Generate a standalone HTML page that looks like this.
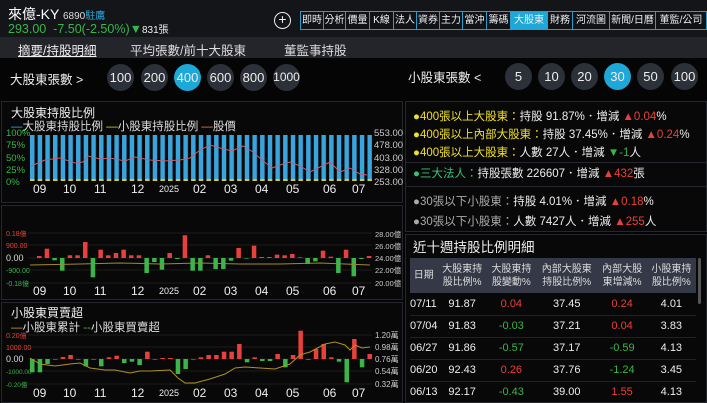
<!DOCTYPE html><html><head><meta charset="utf-8"><style>
*{margin:0;padding:0;box-sizing:border-box}
body{width:707px;height:403px;overflow:hidden;background:#050505;font-family:"Liberation Sans","Noto Sans CJK TC",sans-serif;color:#eee;position:relative}
.a{position:absolute;white-space:nowrap}
.nav{position:absolute;left:300px;top:11px;height:19px;display:flex;border:1px solid #2a9ec8}
.nav div{border-right:1px solid #2a9ec8;font-size:10px;line-height:17px;text-align:center;color:#eee;background:#101216}
.c{position:absolute;width:27px;height:27px;border-radius:50%;background:#2c3038;font-size:13px;line-height:27px;text-align:center;color:#eee}
.c.on{background:#1ea8d8}
.panel{position:absolute;background:#080808;border:1px solid #26272e}
.g{color:#3ab54a}.r{color:#e8413c}.y{color:#f0e020}
.info div{position:absolute;left:7px;font-size:11.5px;white-space:nowrap}
table{border-collapse:collapse;font-size:11px}
</style></head><body>
<div class="a" style="left:0;top:0;width:707px;height:37px;background:#141519"></div>
<div class="a" style="left:8px;top:4px;font-size:14px;color:#fff">來億-KY <span style="font-size:10px;color:#ddd">6890</span><span style="font-size:10px;color:#2aa8d8">駐鷹</span></div>
<div class="a g" style="left:8px;top:21px;font-size:12.5px">293.00 &nbsp;-7.50(-2.50%)▼<span style="font-size:10px;color:#eee">831張</span></div>
<div class="a" style="left:274px;top:12px;width:17px;height:17px;border:1.5px solid #eee;border-radius:50%;text-align:center;font-size:14px;line-height:13px">+</div>
<div class="nav">
<div style="width:23px">即時</div><div style="width:22px">分析</div><div style="width:24px">價量</div><div style="width:24px">K線</div><div style="width:23px">法人</div><div style="width:23px">資券</div><div style="width:23px">主力</div><div style="width:24px">當沖</div><div style="width:24px">籌碼</div><div style="width:37px;background:#1ea8d8">大股東</div><div style="width:25px">財務</div><div style="width:37px">河流圖</div><div style="width:46px">新聞/日曆</div><div style="width:50px;border-right:0">董監/公司</div>
</div>
<div class="a" style="left:0;top:37px;width:707px;height:21px;background:#24252b"></div>
<div class="a" style="left:18px;top:40px;font-size:12.5px;text-decoration:underline;color:#eee">摘要/持股明細</div>
<div class="a" style="left:130px;top:40px;font-size:12.5px;color:#ddd">平均張數/前十大股東</div>
<div class="a" style="left:284px;top:40px;font-size:12.5px;color:#ddd">董監事持股</div>
<div class="a" style="left:10px;top:69px;font-size:12.5px">大股東張數 &gt;</div>
<div class="c" style="left:107px;top:64px">100</div><div class="c" style="left:141px;top:64px">200</div><div class="c on" style="left:174px;top:64px">400</div><div class="c" style="left:207px;top:64px">600</div><div class="c" style="left:240px;top:64px">800</div><div class="c" style="left:273px;top:64px;font-size:12px">1000</div>
<div class="a" style="left:408px;top:67px;font-size:12.5px">小股東張數 &lt;</div>
<div class="c" style="left:505px;top:63px">5</div><div class="c" style="left:538px;top:63px">10</div><div class="c" style="left:571px;top:63px">20</div><div class="c on" style="left:604px;top:63px">30</div><div class="c" style="left:637px;top:63px">50</div><div class="c" style="left:671px;top:63px">100</div>

<div class="panel" style="left:1px;top:101px;width:402px;height:102px"></div>
<div class="panel" style="left:1px;top:205px;width:402px;height:95px"></div>
<div class="panel" style="left:1px;top:302px;width:402px;height:101px"></div>
<svg class="a" style="left:0;top:0" width="405" height="403" font-family="Liberation Sans,Noto Sans CJK TC,sans-serif">
<defs><pattern id="bp" x="30" y="0" width="7.67" height="403" patternUnits="userSpaceOnUse"><rect x="0" y="135" width="4.5" height="46" fill="#3aa4dc"/><rect x="0" y="179" width="4.5" height="2" fill="#d8c828"/></pattern></defs>
<text x="11" y="117" font-size="12" fill="#eee">大股東持股比例</text>
<text x="11" y="130" font-size="11.5" fill="#ddd"><tspan fill="#3aa4dc">—</tspan>大股東持股比例 <tspan fill="#d8c828">—</tspan>小股東持股比例 <tspan fill="#e08030">—</tspan>股價</text>
<g font-size="9.5" fill="#3ab54a"><text x="6" y="136">100%</text><text x="6" y="148">75%</text><text x="6" y="161">50%</text><text x="6" y="173">25%</text><text x="6" y="185">0%</text></g>
<g font-size="9.5" fill="#ccc"><text x="374" y="136">553.00</text><text x="374" y="148">478.00</text><text x="374" y="161">403.00</text><text x="374" y="173">328.00</text><text x="374" y="185">253.00</text></g>
<rect x="30" y="130" width="342" height="52" fill="url(#bp)"/>
<polyline fill="none" stroke="#c06070" stroke-width="1" points="31,166 45,160 60,158 75,163 83,162 88,156 100,159 110,158 125,161 135,157 150,160 165,161 180,160 190,158 200,150 210,145 220,148 232,151 243,146 253,152 262,160 272,168 280,165 290,162 300,166 310,172 320,167 330,162 340,172 350,168 360,174 367,175"/>
<g font-size="12" fill="#eee"><text x="33" y="193">09</text><text x="63" y="193">10</text><text x="94" y="193">11</text><text x="131" y="193">12</text><text x="159" y="192" font-size="9">2025</text><text x="193" y="193">02</text><text x="224" y="193">03</text><text x="255" y="193">04</text><text x="286" y="193">05</text><text x="323" y="193">06</text><text x="352" y="193">07</text></g>

<g font-size="7" fill="#e8413c"><text x="6" y="236">0.18億</text><text x="6" y="248">900.00</text></g>
<text x="6" y="261" font-size="9" fill="#ddd">0.00</text>
<g font-size="7" fill="#3ab54a"><text x="6" y="273">-900.00</text><text x="6" y="286">-0.18億</text></g>
<g font-size="7.5" fill="#ccc"><text x="375" y="237">28.00億</text><text x="375" y="249">26.00億</text><text x="375" y="261">24.00億</text><text x="375" y="273">22.00億</text><text x="375" y="286">20.00億</text></g>
<g stroke="#333" stroke-width="0.6"><line x1="28" y1="233" x2="372" y2="233"/><line x1="28" y1="245" x2="372" y2="245"/><line x1="28" y1="258" x2="372" y2="258"/><line x1="28" y1="270" x2="372" y2="270"/><line x1="28" y1="283" x2="372" y2="283"/></g>
<g id="b2"></g>
<polyline fill="none" stroke="#a08830" stroke-width="1" points="30,265 80,264 120,263 160,264 200,263 240,264 280,264 320,263 345,264 370,265"/>
<g font-size="12" fill="#eee"><text x="33" y="295">09</text><text x="63" y="295">10</text><text x="94" y="295">11</text><text x="131" y="295">12</text><text x="159" y="294" font-size="9">2025</text><text x="193" y="295">02</text><text x="224" y="295">03</text><text x="255" y="295">04</text><text x="286" y="295">05</text><text x="323" y="295">06</text><text x="352" y="295">07</text></g>

<text x="11" y="317" font-size="12" fill="#eee">小股東買賣超</text>
<text x="11" y="331" font-size="11.5" fill="#ddd"><tspan fill="#c0a030">—</tspan>小股東累計 <tspan fill="#3ab54a">--</tspan>小股東買賣超</text>
<g font-size="7" fill="#e8413c"><text x="6" y="338">0.20億</text><text x="6" y="350">1000.00</text></g>
<text x="6" y="362" font-size="9" fill="#ddd">0.00</text>
<g font-size="6.5" fill="#3ab54a"><text x="6" y="374">-1000.00</text><text x="6" y="387">-0.20億</text></g>
<g font-size="8" fill="#ccc"><text x="375" y="338">1.20萬</text><text x="375" y="350">0.98萬</text><text x="375" y="362">0.76萬</text><text x="375" y="374">0.54萬</text><text x="375" y="387">0.32萬</text></g>
<g stroke="#333" stroke-width="0.6"><line x1="28" y1="335" x2="372" y2="335"/><line x1="28" y1="347" x2="372" y2="347"/><line x1="28" y1="359" x2="372" y2="359"/><line x1="28" y1="371" x2="372" y2="371"/><line x1="28" y1="384" x2="372" y2="384"/></g>
<g id="b3"></g>
<polyline fill="none" stroke="#b09028" stroke-width="1" points="30,358 40,364 55,366 70,364 80,363 90,368 105,370 115,370 130,373 140,371 150,371 170,370 178,378 185,383 195,383 210,379 225,374 235,368 245,367 260,368 275,369 290,364 300,355 310,352 325,344 335,342 345,345 350,350 355,345 362,348 370,347"/>
<g font-size="12" fill="#eee"><text x="33" y="397">09</text><text x="63" y="397">10</text><text x="94" y="397">11</text><text x="131" y="397">12</text><text x="159" y="396" font-size="9">2025</text><text x="193" y="397">02</text><text x="224" y="397">03</text><text x="255" y="397">04</text><text x="286" y="397">05</text><text x="323" y="397">06</text><text x="352" y="397">07</text></g>
</svg>
<script>
function bars(id,x0,z,vals){var g=document.getElementById(id),s='';vals.forEach(function(v,i){var x=x0+i*7.67,h=Math.abs(v)/3;s+='<rect x="'+x.toFixed(1)+'" y="'+(v>0?z-h:z).toFixed(1)+'" width="4.5" height="'+Math.max(h,0.6).toFixed(1)+'" fill="'+(v>0?'#e8413c':'#3ab54a')+'"/>'});g.innerHTML=s;}
bars('b2',37,258,[6,28,-7,-38,8,8,48,-58,25,8,15,25,8,8,-45,-12,-35,15,-3,68,-38,-38,8,-33,-33,-8,30,0,37,3,3,10,8,12,2,-18,-10,22,4,-45,25,-55,-3,6]);
bars('b3',30,359,[-40,-40,-15,0,6,12,0,-22,0,-22,5,10,-12,-8,-18,22,0,3,3,-45,-30,0,5,12,12,22,22,45,-10,5,-6,-6,15,-25,12,85,-2,30,45,5,-8,-70,60,-25,15]);
</script>

<div class="panel info" style="left:405px;top:101px;width:302px;height:131px">
<div style="top:6px"><span class="y">●400張以上大股東：</span>持股 91.87%．增減 <span class="r">▲0.04</span>%</div>
<div style="top:24px"><span class="y">●400張以上內部大股東：</span>持股 37.45%．增減 <span class="r">▲0.24</span>%</div>
<div style="top:42px"><span class="y">●400張以上大股東：</span>人數 27人．增減 <span class="g">▼-1</span>人</div>
<div style="top:63px"><span style="color:#3cc080">●三大法人：</span>持股張數 226607．增減 <span class="r">▲432</span>張</div>
<div style="top:91px"><span style="color:#aaa">●30張以下小股東：</span>持股 4.01%．增減 <span class="r">▲0.18</span>%</div>
<div style="top:111px"><span style="color:#aaa">●30張以下小股東：</span>人數 7427人．增減 <span class="r">▲255</span>人</div>
</div>
<div class="a" style="left:405px;top:162px;width:302px;height:1px;background:#26272e"></div>
<div class="a" style="left:405px;top:186px;width:302px;height:1px;background:#26272e"></div>
<div class="panel" style="left:405px;top:234px;width:302px;height:169px"></div>
<div class="a" style="left:413px;top:236px;font-size:13.5px;color:#eee">近十週持股比例明細</div>
<div class="a" style="left:698px;top:258px;width:3px;height:46px;background:#555;border-radius:2px"></div>
<table class="a" style="left:410px;top:258px;width:286px">
<tr style="background:#353846;height:35px;font-size:10px;color:#ddd;text-align:center;line-height:13px"><td style="width:26px">日期</td><td>大股東持<br>股比例%</td><td>大股東持<br>股變動%</td><td>內部大股東<br>持股比例%</td><td>內部大股<br>東增減%</td><td>小股東持<br>股比例%</td></tr>
<tr style="height:22px;text-align:center;border-bottom:1px solid #222"><td style="text-align:left">07/11</td><td>91.87</td><td class="r">0.04</td><td>37.45</td><td class="r">0.24</td><td>4.01</td></tr>
<tr style="height:22px;text-align:center;border-bottom:1px solid #222"><td style="text-align:left">07/04</td><td>91.83</td><td class="g">-0.03</td><td>37.21</td><td class="r">0.04</td><td>3.83</td></tr>
<tr style="height:22px;text-align:center;border-bottom:1px solid #222"><td style="text-align:left">06/27</td><td>91.86</td><td class="g">-0.57</td><td>37.17</td><td class="g">-0.59</td><td>4.13</td></tr>
<tr style="height:22px;text-align:center;border-bottom:1px solid #222"><td style="text-align:left">06/20</td><td>92.43</td><td class="r">0.26</td><td>37.76</td><td class="g">-1.24</td><td>3.45</td></tr>
<tr style="height:22px;text-align:center"><td style="text-align:left">06/13</td><td>92.17</td><td class="g">-0.43</td><td>39.00</td><td class="r">1.55</td><td>4.13</td></tr>
</table>
</body></html>
